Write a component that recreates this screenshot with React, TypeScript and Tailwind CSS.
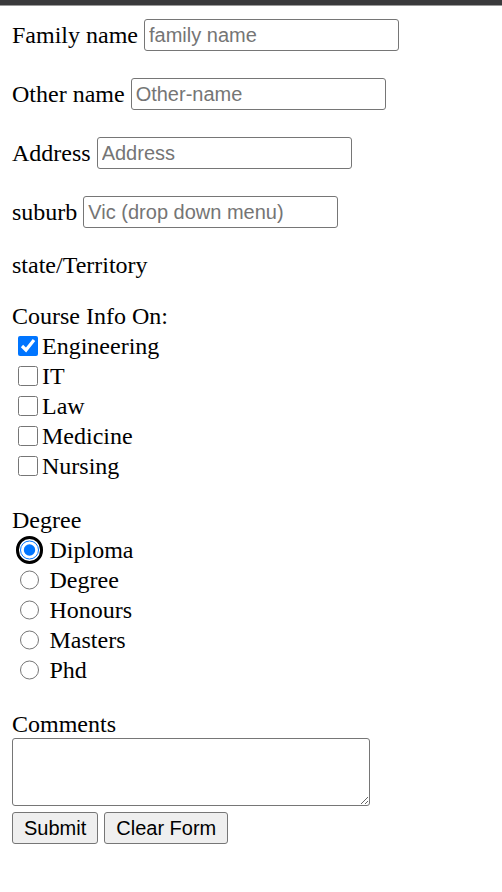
const serif = "font-['Liberation_Serif','Times_New_Roman',serif]";

function TextRow({ label, placeholder }: { label: string; placeholder: string }) {
  return (
    <div className="flex h-[32px] items-center gap-[6px]">
      <span>{label}</span>
      <input
        type="text"
        placeholder={placeholder}
        className="h-[32px] w-[255px] rounded-[3px] border border-[#767676] bg-white px-[4px] font-['Liberation_Sans',Arial,sans-serif] text-[20px] text-black placeholder:text-[#757575]"
      />
    </div>
  );
}

const courses = ["Engineering", "IT", "Law", "Medicine", "Nursing"];
const degrees = ["Diploma", "Degree", "Honours", "Masters", "Phd"];

export default function App() {
  return (
    <div className={`min-h-[892px] bg-white text-[24px] leading-none text-black ${serif}`}>
      <div className="h-[5px] bg-[#3a3a3c]" />
      <div className="h-px bg-[#9a9a9a]" />
      <form className="px-[12px] pt-[13px]">
        <TextRow label="Family name" placeholder="family name" />
        <div className="mt-[27px]">
          <TextRow label="Other name" placeholder="Other-name" />
        </div>
        <div className="mt-[27px]">
          <TextRow label="Address" placeholder="Address" />
        </div>
        <div className="mt-[27px]">
          <TextRow label="suburb" placeholder="Vic (drop down menu)" />
        </div>

        <div className="mt-[22px] flex h-[30px] items-center">state/Territory</div>

        <div className="mt-[21px] flex h-[30px] items-center">Course Info On:</div>
        {courses.map((c, i) => (
          <label key={c} className="flex h-[30px] items-center">
            <input
              type="checkbox"
              defaultChecked={i === 0}
              className="mr-[4.5px] ml-[6px] h-[19.5px] w-[19.5px]"
            />
            <span>{c}</span>
          </label>
        ))}

        <div className="mt-[24px] flex h-[30px] items-center">Degree</div>
        {degrees.map((d, i) => (
          <label key={d} className="flex h-[30px] items-center">
            <span
              className={
                i === 0
                  ? "mr-[10.5px] ml-[7.5px] flex rounded-full outline-[3px] outline-offset-[1px] outline-black outline-solid"
                  : "mr-[10.5px] ml-[7.5px] flex"
              }
            >
              <input
                type="radio"
                name="degree"
                defaultChecked={i === 0}
                className="h-[19.5px] w-[19.5px]"
              />
            </span>
            <span>{d}</span>
          </label>
        ))}

        <div className="mt-[24px] flex h-[29px] items-center">Comments</div>
        <textarea className="block h-[68px] w-[358px] resize rounded-[3px] border border-[#767676] bg-white" />
        <div className="mt-[6px] flex gap-[6px] font-['Liberation_Sans',Arial,sans-serif] text-[20px]">
          <button
            type="submit"
            className="h-[32px] rounded-[3px] border border-[#767676] bg-[#efefef] px-[11px]"
          >
            Submit
          </button>
          <button
            type="reset"
            className="h-[32px] rounded-[3px] border border-[#767676] bg-[#efefef] px-[11px]"
          >
            Clear Form
          </button>
        </div>
      </form>
    </div>
  );
}
